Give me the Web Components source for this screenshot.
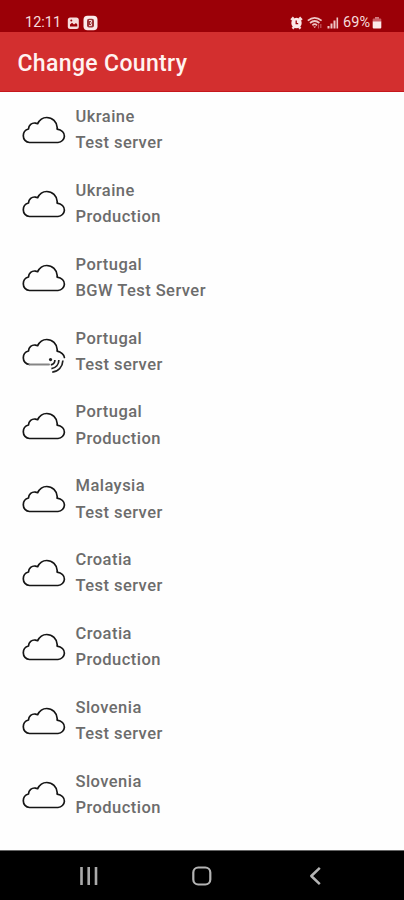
<!DOCTYPE html>
<html lang="en">
<head>
<meta charset="utf-8">
<title>Change Country</title>
<style>
html,body{margin:0;padding:0;background:#fefefe}
body{width:404px;height:900px;overflow:hidden;font-family:Roboto,"Liberation Sans",sans-serif}
</style>
</head>
<body>
<country-screen></country-screen>
<script>
const define = (name, html) => {
  const t = document.createElement('template');
  t.innerHTML = html;
  customElements.define(name, class extends HTMLElement {
    constructor() {
      super();
      this.attachShadow({mode: 'open'}).appendChild(t.content.cloneNode(true));
    }
  });
};

define('status-bar', `
<style>
:host{display:flex;align-items:center;height:32px;box-sizing:border-box;padding:13px 22px 0 25px;background:#9b0007;color:#f6dcdc;font-size:14.5px;line-height:19px;justify-content:space-between}
div{display:flex;align-items:center}
svg{display:block;flex:none}
.time{width:37px}
.pct{width:29px;white-space:nowrap;letter-spacing:.1px}
</style>
<div>
  <span class="time">12:11</span>
  <svg width="13" height="16" viewBox="0 0 13 16" style="margin-left:5px"><rect x=".8" y="2.5" width="11" height="11.5" rx="2.5" fill="#f6dcdc"/><path d="M3 11.5V9.5l2-1.7 2 1.7 2-1.5 1.3 1.5v2z" fill="#9b0007"/><circle cx="4.3" cy="5.6" r="1" fill="#9b0007"/></svg>
  <svg width="15" height="16" viewBox="0 0 15 16" style="margin-left:3px"><rect x=".5" y=".8" width="14" height="14.4" rx="4" fill="#fbeaea"/><rect x="4" y="3.8" width="7" height="8.6" rx="2" fill="#9b3438"/><path d="M6 5.5h2.5v1.8L7 8l1.5.8v1.8H6" fill="none" stroke="#f6dcdc" stroke-width="1"/></svg>
</div>
<div>
  <svg width="13" height="14" viewBox="0 0 13 14"><path d="M1.200 4l2.500-2.600M11.800 4L9.300 1.400M2.500 12.600l1.500-1.600M10.500 12.600L9 11" stroke="#f6dcdc" stroke-width="2.400" fill="none"/><circle cx="6.500" cy="7" r="5.200" fill="#fbeaea"/><path d="M6.200 4.600v3.100h2" stroke="#9b0007" stroke-width="1.300" fill="none"/></svg>
  <svg width="16" height="14" viewBox="0 0 16 14" style="margin-left:4px" fill="none" stroke="#eec6c6" stroke-width="1.700"><path d="M.8 4.600Q7.700-1 14.600 4.600M3 7Q7.700 3 12.400 7M5.400 9.300Q7.700 7.100 10 9.300"/><path d="M6.200 10.500h3L7.700 12z" fill="#eec6c6" stroke="none"/><path d="M11.500 8.500v4M13.800 8v4" stroke="#c8555c" stroke-width="1.200"/></svg>
  <svg width="12" height="14" viewBox="0 0 12 14" style="margin-left:4px" fill="#eec6c6"><path d="M.5 10h2v2.500h-2zM3.500 7.500h2v5h-2zM6.500 4.500h2v8h-2zM9.500 1.500h1.600v11H9.500z"/></svg>
  <span class="pct" style="margin-left:4px">69%</span>
  <svg width="10" height="14" viewBox="0 0 10 14"><path d="M3 1.200h4v1.600H3z" fill="#e29ca0"/><rect x=".7" y="2.400" width="8.600" height="4" rx="1" fill="#cc6068"/><path d="M.7 5.500h8.600v6a1 1 0 0 1-1 1H1.700a1 1 0 0 1-1-1z" fill="#fbeaea"/></svg>
</div>`);

define('title-bar', `
<style>
:host{display:flex;align-items:center;height:60px;box-sizing:border-box;padding:5px 17px 0 17.500px;background:#d32f2f;border-bottom:1.500px solid #c6171c;color:#fff3f1}
h1{margin:0;font-size:23px;line-height:30px;font-weight:500;letter-spacing:.35px;white-space:nowrap}
</style>
<h1><slot></slot></h1>`);

define('cloud-icon', `
<style>
:host{display:block;width:44px;height:32px}
svg{display:block}
.part{display:none}
:host([signal]) .part{display:block}
:host([signal]) .full{display:none}
</style>
<svg width="44" height="32" viewBox="0 0 44 32" fill="none" stroke="#151515" stroke-width="1.700" stroke-linejoin="round" stroke-linecap="round">
  <path class="full" d="M7.500 27.500C3.800 27.300 1.300 24.300 1.300 20.700C1.300 17.300 3.500 14.800 6.500 14C6.600 10.200 9.800 7.500 13.500 8.100L15.700 8.700C17.500 4.800 20.800 2.500 24.700 2.500C30.500 2.500 34.900 7 35.200 12.500L35.100 14.100C39.500 14.900 42.600 17.700 42.400 21.200C42.200 24.500 39.500 27.300 36 27.500Z"/>
  <path class="part" d="M7.500 27.500C3.800 27.300 1.300 24.300 1.300 20.700C1.300 17.300 3.500 14.800 6.500 14C6.600 10.200 9.800 7.500 13.500 8.100L15.700 8.700C17.500 4.800 20.800 2.500 24.700 2.500C30.500 2.500 34.900 7 35.200 12.500L35.100 14.100C39 14.900 42.400 17.700 42.400 20.500"/>
  <path class="part" d="M7.500 27.500H27" stroke="#858585" stroke-width="2"/>
</svg>`);

define('signal-icon', `
<style>:host{display:block}svg{display:block}</style>
<svg width="17" height="17" viewBox="0 0 18 18" fill="none" stroke="#202020" stroke-width="1.800"><circle cx="2.700" cy="2.700" r="1.700" fill="#202020" stroke="none"/><path d="M7.300 3.200C7.300 6 5.600 7.800 3 8.300M11.500 3.200C11.500 8 8.300 11.700 3.600 12.300M15.800 3.700C15.400 10.500 11 15.500 4.500 16.100"/></svg>`);

define('country-row', `
<style>
:host{display:flex;align-items:center;height:73.900px;box-sizing:border-box;padding-left:22px;color:#6c6c6c;font-size:16.500px;font-weight:500;line-height:26.200px;letter-spacing:.45px}
.icon{position:relative;width:44px;margin-right:9.500px;padding-top:4px}
.badge{position:absolute;left:26.300px;top:24px}
.text{display:flex;flex-direction:column;white-space:nowrap;padding-top:2.300px}
</style>
<div class="icon"><slot name="icon"><cloud-icon></cloud-icon></slot><div class="badge"><slot name="badge"></slot></div></div>
<div class="text"><slot name="country"></slot><slot name="server"></slot></div>`);

define('nav-bar', `
<style>
:host{display:grid;grid-template-columns:repeat(3,1fr);width:404px;height:50px;box-sizing:border-box;padding:0 32px;background:#000;border-top:1px solid #666;align-items:center;justify-items:center}
svg{display:block}
</style>
<svg width="24" height="24" viewBox="0 0 24 24" stroke="#aaa" stroke-width="2.600" fill="none"><path d="M4.500 3v18M11.700 3v18M19 3v18"/></svg>
<svg width="24" height="24" viewBox="0 0 24 24" stroke="#b4b4b4" stroke-width="2.200" fill="none"><rect x="3.300" y="3.500" width="17" height="17" rx="5"/></svg>
<svg width="24" height="24" viewBox="0 0 24 24" stroke="#b4b4b4" stroke-width="2.500" fill="none" stroke-linejoin="round"><path d="M16.800 3.800L8.300 12l8.500 8.200"/></svg>`);

define('country-list', `<style>:host{display:block;height:758px;background:#fefefe;overflow:hidden}</style><slot></slot>`);

customElements.define('country-screen', class extends HTMLElement {
  constructor() {
    super();
    const rows = [
      ['Ukraine', 'Test server'], ['Ukraine', 'Production'], ['Portugal', 'BGW Test Server'],
      ['Portugal', 'Test server', true], ['Portugal', 'Production'], ['Malaysia', 'Test server'],
      ['Croatia', 'Test server'], ['Croatia', 'Production'], ['Slovenia', 'Test server'], ['Slovenia', 'Production']
    ];
    this.attachShadow({mode: 'open'}).innerHTML = `
      <style>:host{display:flex;flex-direction:column;width:404px;height:900px}</style>
      <status-bar></status-bar>
      <title-bar>Change Country</title-bar>
      <country-list>${rows.map(([c, s, live]) => `<country-row>${live ? '<cloud-icon slot="icon" signal></cloud-icon><signal-icon slot="badge"></signal-icon>' : ''}<span slot="country">${c}</span><span slot="server">${s}</span></country-row>`).join('')}</country-list>
      <nav-bar></nav-bar>`;
  }
});
</script>
</body>
</html>
